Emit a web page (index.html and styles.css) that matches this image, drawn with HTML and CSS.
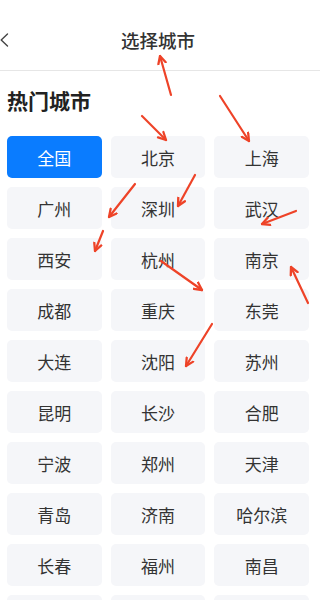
FILE: index.html
```html
<!DOCTYPE html>
<html lang="zh-CN">
<head>
<meta charset="utf-8">
<title>选择城市</title>
<link rel="stylesheet" href="styles.css">
</head>
<body>
<div class="page">
  <header class="topbar">
    <div class="back">
      <svg width="9" height="14" viewBox="0 0 9 14"><polyline points="7.5,1 1.2,7 7.5,13" fill="none" stroke="#444" stroke-width="1.4" stroke-linecap="round" stroke-linejoin="round"/></svg>
    </div>
    <h1 class="title">选择城市</h1>
    <div class="spacer"></div>
  </header>
  <section class="hot">
    <h2 class="section-title">热门城市</h2>
    <div class="grid">
      <div class="city active">全国</div>
      <div class="city">北京</div>
      <div class="city">上海</div>
      <div class="city">广州</div>
      <div class="city">深圳</div>
      <div class="city">武汉</div>
      <div class="city">西安</div>
      <div class="city">杭州</div>
      <div class="city">南京</div>
      <div class="city">成都</div>
      <div class="city">重庆</div>
      <div class="city">东莞</div>
      <div class="city">大连</div>
      <div class="city">沈阳</div>
      <div class="city">苏州</div>
      <div class="city">昆明</div>
      <div class="city">长沙</div>
      <div class="city">合肥</div>
      <div class="city">宁波</div>
      <div class="city">郑州</div>
      <div class="city">天津</div>
      <div class="city">青岛</div>
      <div class="city">济南</div>
      <div class="city">哈尔滨</div>
      <div class="city">长春</div>
      <div class="city">福州</div>
      <div class="city">南昌</div>
      <div class="city"></div>
      <div class="city"></div>
      <div class="city"></div>
    </div>
  </section>
  <svg class="arrows" width="320" height="600" viewBox="0 0 320 600">
    <defs>
      <marker id="ah" markerUnits="userSpaceOnUse" viewBox="0 0 10 10" refX="8.5" refY="5" markerWidth="10" markerHeight="10" orient="auto">
        <path d="M1,1.2 L8.5,5 L1,8.8" fill="none" stroke="#ee4328" stroke-width="2.3" stroke-linecap="round" stroke-linejoin="round"/>
      </marker>
    </defs>
    <g stroke="#ee4328" stroke-width="2.2" stroke-linecap="round" marker-end="url(#ah)">
      <line x1="171" y1="95" x2="160" y2="56"/>
      <line x1="142" y1="116" x2="166" y2="140"/>
      <line x1="220" y1="96" x2="249" y2="141"/>
      <line x1="135" y1="184" x2="109" y2="217"/>
      <line x1="195" y1="175" x2="178" y2="206"/>
      <line x1="296" y1="211" x2="262" y2="224"/>
      <line x1="103" y1="231" x2="95" y2="251"/>
      <line x1="161" y1="261" x2="202" y2="290"/>
      <line x1="308" y1="303" x2="291" y2="267"/>
      <line x1="212" y1="324" x2="186" y2="366"/>
    </g>
  </svg>
</div>
</body>
</html>
```

FILE: styles.css
```css
* {
  box-sizing: border-box;
}
html, body {
  margin: 0;
  padding: 0;
  background: #ffffff;
}
body {
  font-family: "Noto Sans CJK SC", "Noto Sans", sans-serif;
  color: #333333;
}
.page {
  position: relative;
  width: 320px;
  height: 600px;
  overflow: hidden;
}
.topbar {
  display: grid;
  grid-template-columns: 1fr auto 1fr;
  align-items: center;
  padding: 28px 0 18px;
  height: 71px;
  border-bottom: 1px solid #e6e6e6;
}
.back {
  display: flex;
  align-items: center;
  height: 24px;
}
.title {
  margin: 0;
  font-size: 18.5px;
  font-weight: 500;
  line-height: 24px;
  color: #333333;
  transform: translateX(-2px);
}
.hot {
  padding: 15px 11px 0 7px;
}
.section-title {
  margin: 0 0 22px;
  font-size: 21px;
  font-weight: 700;
  line-height: 28px;
  color: #222222;
}
.grid {
  display: grid;
  grid-template-columns: repeat(3, 1fr);
  grid-auto-rows: 42px;
  gap: 9px 9px;
}
.city {
  display: flex;
  align-items: center;
  justify-content: center;
  background: #f5f6f9;
  border-radius: 5px;
  font-size: 17px;
  color: #333333;
}
.city.active {
  background: #0a7cff;
  color: #ffffff;
}
.arrows {
  position: absolute;
  left: 0;
  top: 0;
  pointer-events: none;
}
```
